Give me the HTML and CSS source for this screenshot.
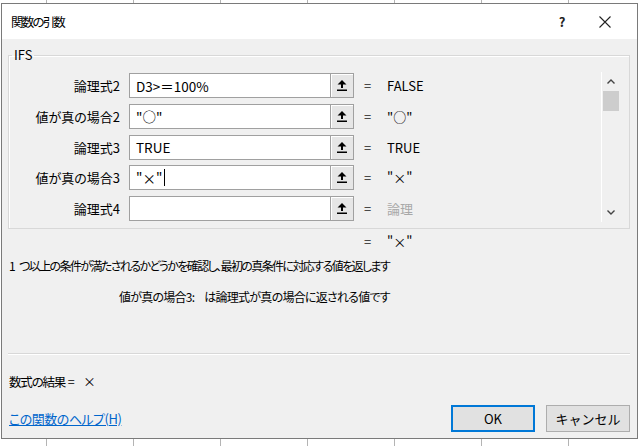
FILE: index.html
```html
<!DOCTYPE html>
<html lang="ja">
<head>
  <meta charset="UTF-8">
  <title>関数の引数</title>
  <link rel="stylesheet" href="styles.css">
</head>
<body>

<div class="dialog">
  <!-- Title bar -->
  <div class="titlebar">
    <span class="title">関数の引数</span>
    <span class="help-btn">?</span>
    <span class="close-btn">
      <svg width="12" height="12" viewBox="0 0 12 12"><path d="M0.5 0.5 L11.5 11.5 M11.5 0.5 L0.5 11.5" stroke="#222" stroke-width="1.1" fill="none"/></svg>
    </span>
  </div>

  <div class="content">
    <!-- Arguments -->
    <fieldset class="args">
      <legend>IFS</legend>
      <div class="args-body">
        <div class="arg-list">
          <div class="arg-row">
            <span class="arg-label">論理式2</span>
            <span class="arg-input">D3&gt;＝100%</span>
            <span class="ref-btn"><svg width="10" height="11" viewBox="0 0 10 11"><path d="M5 0 L9.5 4.5 L0.5 4.5 Z M4 4 H6 V8 H4 Z M0 9.5 H10 V11 H0 Z" fill="#000"/></svg></span>
            <span class="eq">=</span>
            <span class="arg-value">FALSE</span>
          </div>
          <div class="arg-row">
            <span class="arg-label">値が真の場合2</span>
            <span class="arg-input">"○"</span>
            <span class="ref-btn"><svg width="10" height="11" viewBox="0 0 10 11"><path d="M5 0 L9.5 4.5 L0.5 4.5 Z M4 4 H6 V8 H4 Z M0 9.5 H10 V11 H0 Z" fill="#000"/></svg></span>
            <span class="eq">=</span>
            <span class="arg-value">"○"</span>
          </div>
          <div class="arg-row">
            <span class="arg-label">論理式3</span>
            <span class="arg-input">TRUE</span>
            <span class="ref-btn"><svg width="10" height="11" viewBox="0 0 10 11"><path d="M5 0 L9.5 4.5 L0.5 4.5 Z M4 4 H6 V8 H4 Z M0 9.5 H10 V11 H0 Z" fill="#000"/></svg></span>
            <span class="eq">=</span>
            <span class="arg-value">TRUE</span>
          </div>
          <div class="arg-row">
            <span class="arg-label">値が真の場合3</span>
            <span class="arg-input">"×"<span class="caret"></span></span>
            <span class="ref-btn"><svg width="10" height="11" viewBox="0 0 10 11"><path d="M5 0 L9.5 4.5 L0.5 4.5 Z M4 4 H6 V8 H4 Z M0 9.5 H10 V11 H0 Z" fill="#000"/></svg></span>
            <span class="eq">=</span>
            <span class="arg-value">"×"</span>
          </div>
          <div class="arg-row">
            <span class="arg-label">論理式4</span>
            <span class="arg-input"></span>
            <span class="ref-btn"><svg width="10" height="11" viewBox="0 0 10 11"><path d="M5 0 L9.5 4.5 L0.5 4.5 Z M4 4 H6 V8 H4 Z M0 9.5 H10 V11 H0 Z" fill="#000"/></svg></span>
            <span class="eq">=</span>
            <span class="arg-value muted">論理</span>
          </div>
        </div>

        <div class="scrollbar">
          <svg class="arrow" width="8" height="5" viewBox="0 0 8 5"><path d="M0.5 4.5 L4 1 L7.5 4.5" stroke="#444" stroke-width="1.4" fill="none"/></svg>
          <div class="thumb"></div>
          <div class="track"></div>
          <svg class="arrow" width="8" height="5" viewBox="0 0 8 5"><path d="M0.5 0.5 L4 4 L7.5 0.5" stroke="#444" stroke-width="1.4" fill="none"/></svg>
        </div>
      </div>
    </fieldset>

    <div class="func-value"><span class="eq">=</span><span>"×"</span></div>
    <p class="func-desc"><span class="num">1</span>つ以上の条件が満たされるかどうかを確認し、最初の真条件に対応する値を返します</p>
    <p class="arg-desc"><span class="arg-name">値が真の場合3:</span>は論理式が真の場合に返される値です</p>

    <hr class="sep">

    <div class="result"><span class="result-label">数式の結果</span> =&nbsp;&nbsp; ×</div>

    <div class="footer">
      <a class="help-link" href="#">この関数のヘルプ(H)</a>
      <button class="btn btn-ok">OK</button>
      <button class="btn">キャンセル</button>
    </div>
  </div>
</div>

</body>
</html>
```

FILE: styles.css
```css
body {
  margin: 0;
  width: 640px;
  height: 446px;
  overflow: hidden;
  font-family: "Noto Sans CJK JP", sans-serif;
  font-feature-settings: "palt";
  color: #000;
  background: #fff repeating-linear-gradient(90deg, transparent 0 46px, #b4b4b4 46px 47px, transparent 47px 87px);
}
.dialog {
  margin: 3px 0 0 1px;
  width: 637px;
  height: 436px;
  box-sizing: border-box;
  border: 1px solid #7a7a7a;
  background: #f0f0f0;
  display: flex;
  flex-direction: column;
}

/* title bar */
.titlebar {
  height: 35px;
  background: #fff;
  display: flex;
  align-items: center;
  padding-left: 9px;
  flex-shrink: 0;
}
.title {
  flex: 1;
  font-size: 12.5px;
  letter-spacing: -1.8px;
}
.help-btn {
  width: 40px;
  text-align: center;
  font-size: 13px;
  font-weight: bold;
  color: #222;
}
.close-btn {
  width: 46px;
  margin-right: 9px;
  display: flex;
  justify-content: center;
}

.content {
  flex: 1;
  padding: 8px 7px 6px 6px;
  display: flex;
  flex-direction: column;
}

/* arguments group */
.args {
  margin: 0;
  padding: 0 0 6px 0;
  border: 1px solid #d8d8d8;
  box-shadow: inset 1px 1px 0 #fff;
}
.args legend {
  font-size: 13px;
  line-height: 16px;
  padding: 0 2px;
  margin-left: 3px;
}
.args-body {
  display: flex;
  padding-top: 9px;
}
.arg-list {
  flex: 1;
  display: flex;
  flex-direction: column;
  gap: 5.75px;
  padding-top: 1px;
}
.arg-row {
  display: flex;
  align-items: center;
  height: 25px;
  font-size: 13px;
}
.arg-label {
  width: 111px;
  text-align: right;
  margin-right: 9px;
}
.arg-input {
  width: 202px;
  height: 25px;
  box-sizing: border-box;
  border: 1px solid #a0a0a0;
  background: #fff;
  padding-left: 6px;
  display: flex;
  align-items: center;
  font-size: 13.5px;
}
.caret {
  display: inline-block;
  width: 1px;
  height: 17px;
  background: #000;
  margin-left: 2px;
}
.ref-btn {
  width: 24px;
  height: 25px;
  margin-left: -1px;
  box-sizing: border-box;
  border: 1px solid #a0a0a0;
  background: #e6e6e6;
  box-shadow: inset 1px 1px 0 #fff;
  display: flex;
  align-items: center;
  justify-content: center;
}
.eq {
  width: 8px;
  margin-left: 10px;
  margin-right: 15px;
  color: #222;
}
.arg-value.muted {
  color: #a8a8a8;
}

.scrollbar {
  width: 18px;
  height: 150px;
  margin-right: 9px;
  border-left: 1px solid #fff;
  display: flex;
  flex-direction: column;
  align-items: center;
}
.scrollbar .arrow {
  margin: 7px 0;
}
.thumb {
  width: 16px;
  height: 20px;
  background: #cdcdcd;
}
.track {
  flex: 1;
}

/* below the group */
.func-value {
  margin-top: 5px;
  padding-left: 356px;
  font-size: 13px;
  line-height: 16px;
  display: flex;
}
.func-value .eq {
  margin-left: 0;
}
.func-desc {
  margin: 8px 0 0 1px;
  font-size: 12px;
  line-height: 16px;
  letter-spacing: -1.6px;
}
.func-desc .num {
  margin-right: 5px;
}
.arg-desc {
  margin: 15px 0 0 111px;
  font-size: 12px;
  line-height: 16px;
  letter-spacing: -0.75px;
}
.arg-name {
  margin-right: 10px;
}
.sep {
  margin: 48px 0 0 0;
  border: none;
  border-top: 1px solid #d8d8d8;
  border-bottom: 1px solid #fff;
}
.result {
  margin: 19px 0 0 1px;
  font-size: 12.5px;
  line-height: 16px;
}
.result-label {
  letter-spacing: -1.2px;
}
.footer {
  margin-top: auto;
  display: flex;
  align-items: center;
  gap: 11px;
}
.help-link {
  flex: 1;
  padding-left: 1px;
  font-size: 13px;
  letter-spacing: -0.5px;
  color: #0066cc;
}
.btn {
  width: 84px;
  height: 27px;
  border: 1px solid #adadad;
  background: #e1e1e1;
  font-family: inherit;
  font-size: 13px;
  padding: 0;
}
.btn-ok {
  border-color: #0078d7;
  box-shadow: inset 0 0 0 1px #0078d7;
}
```
